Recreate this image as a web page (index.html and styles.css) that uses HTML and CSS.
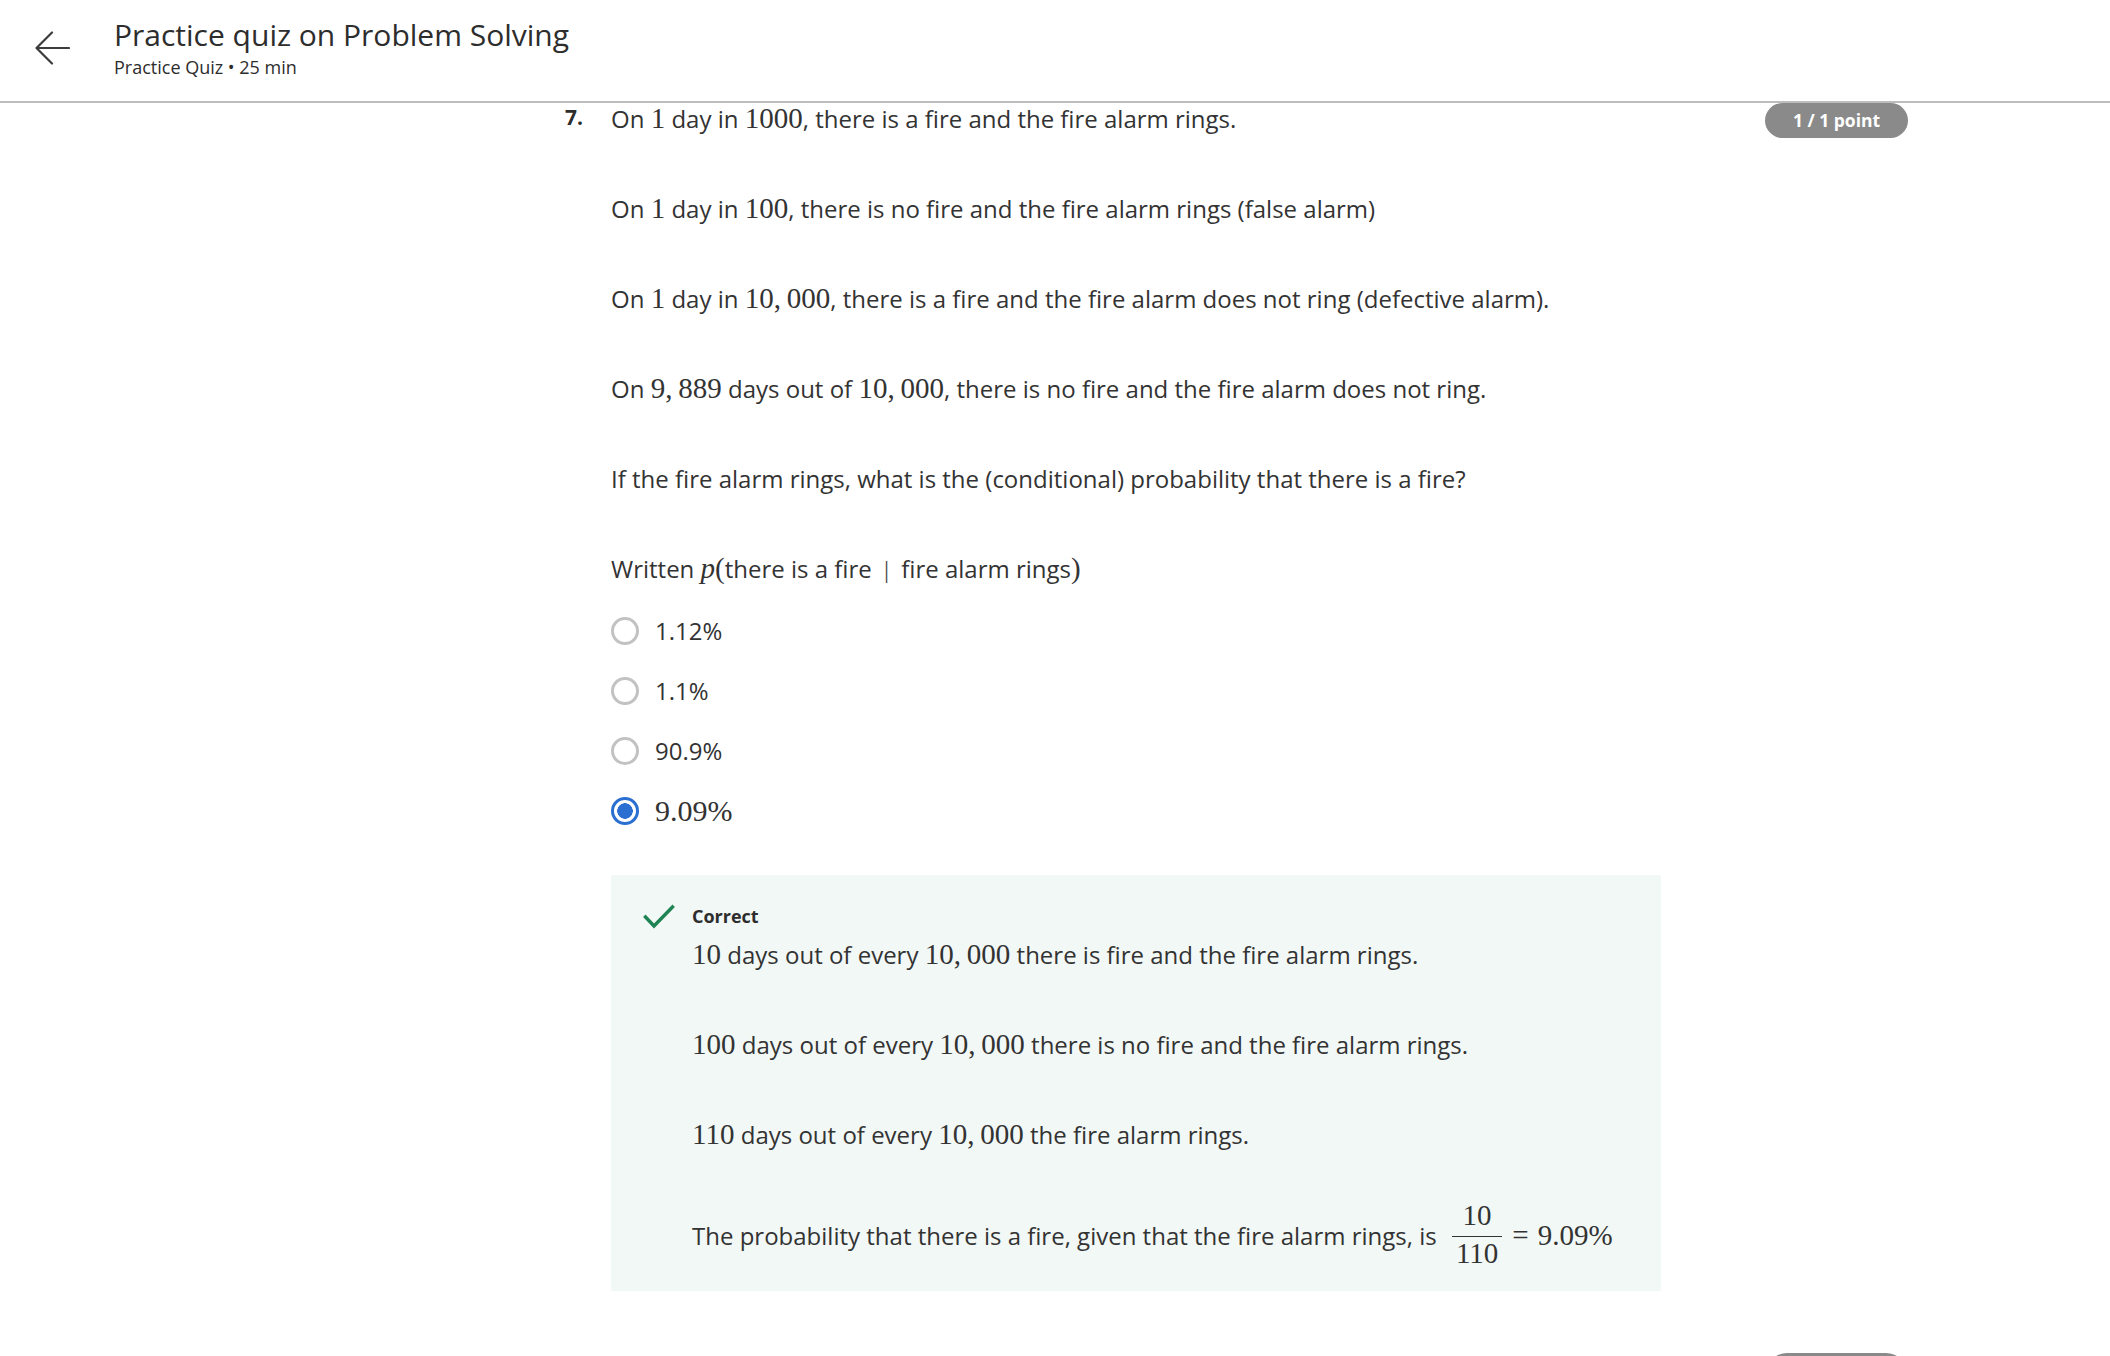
FILE: index.html
```html
<!DOCTYPE html>
<html lang="en">
<head>
<meta charset="utf-8">
<title>Practice quiz on Problem Solving</title>
<link rel="stylesheet" href="styles.css">
</head>
<body>
<header class="topbar">
  <a class="back" href="#" aria-label="Back">
    <svg width="36" height="34" viewBox="0 0 36 34" fill="none" stroke="#3d3d3d" stroke-width="2.2" stroke-linecap="round" stroke-linejoin="round"><path d="M18 1.5 L2.5 17 L18 32.5 M2.5 17 H35"/></svg>
  </a>
  <div class="titles">
    <h1 class="title">Practice quiz on Problem Solving</h1>
    <div class="subtitle">Practice Quiz • 25 min</div>
  </div>
</header>

<main class="main">
  <section class="question">
    <div class="qnum">7.</div>
    <div class="qbody">
      <p class="para">On <span class="m">1</span> day in <span class="m">1000</span>, there is a fire and the fire alarm rings.</p>
      <p class="para">On <span class="m">1</span> day in <span class="m">100</span>, there is no fire and the fire alarm rings (false alarm)</p>
      <p class="para">On <span class="m">1</span> day in <span class="m">10,&thinsp;000</span>, there is a fire and the fire alarm does not ring (defective alarm).</p>
      <p class="para">On <span class="m">9,&thinsp;889</span> days out of <span class="m">10,&thinsp;000</span>, there is no fire and the fire alarm does not ring.</p>
      <p class="para">If the fire alarm rings, what is the (conditional) probability that there is a fire?</p>
      <p class="para para-last">Written <span class="m"><i>p</i>(</span>there is a fire <span class="m bar">|</span> fire alarm rings<span class="m">)</span></p>

      <div class="options">
        <label class="option"><span class="radio"></span><span class="otext">1.12%</span></label>
        <label class="option"><span class="radio"></span><span class="otext">1.1%</span></label>
        <label class="option"><span class="radio"></span><span class="otext">90.9%</span></label>
        <label class="option"><span class="radio radio-on"></span><span class="otext m">9.09%</span></label>
      </div>

      <div class="feedback">
        <svg class="check" width="32" height="26" viewBox="0 0 32 26" fill="none" stroke="#1f8354" stroke-width="3.4" stroke-linecap="square"><path d="M2.5 13 L11 22 L29.5 3"/></svg>
        <div class="fbody">
          <div class="fhead">Correct</div>
          <p class="para"><span class="m">10</span> days out of every <span class="m">10,&thinsp;000</span> there is fire and the fire alarm rings.</p>
          <p class="para"><span class="m">100</span> days out of every <span class="m">10,&thinsp;000</span> there is no fire and the fire alarm rings.</p>
          <p class="para"><span class="m">110</span> days out of every <span class="m">10,&thinsp;000</span> the fire alarm rings.</p>
          <p class="para para-last para-frac">The probability that there is a fire, given that the fire alarm rings, is <span class="frac m"><span class="num">10</span><span class="den">110</span></span><span class="m eq">=</span><span class="m">9.09%</span></p>
        </div>
      </div>
    </div>
    <div class="badge">1 / 1 point</div>
  </section>
  <div class="footer">
    <span class="btn"></span>
  </div>
</main>
</body>
</html>
```

FILE: styles.css
```css
html, body {
  margin: 0;
  padding: 0;
  background: #ffffff;
}
body {
  font-family: "Open Sans", "Noto Sans", sans-serif;
  color: #333333;
}

.topbar {
  display: flex;
  align-items: center;
  height: 101px;
  border-bottom: 2px solid #bdbdbd;
  box-sizing: content-box;
}
.back {
  display: flex;
  margin-left: 34px;
  width: 36px;
  height: 34px;
  margin-top: -5px;
}
.titles {
  margin-left: 44px;
  margin-top: -8px;
}
.title {
  margin: 0;
  font-size: 30px;
  font-weight: 400;
  line-height: 40px;
  color: #2d2d2d;
}
.subtitle {
  font-size: 18px;
  line-height: 22px;
  margin-top: 1px;
  color: #2d2d2d;
}

.main {
  padding-left: 565px;
  width: 1343px;
}
.question {
  display: grid;
  grid-template-columns: 46px 1fr auto;
  align-items: start;
  margin-top: -1px;
}
.qnum {
  font-weight: 700;
  font-size: 21px;
  line-height: 28px;
  padding-top: 1px;
  color: #2d2d2d;
}
.qbody {
  min-width: 0;
}
.para {
  margin: 0 0 57px 0;
  font-size: 24px;
  line-height: 33px;
}
.para-last {
  margin-bottom: 0;
}
.m {
  font-family: "Liberation Serif", "Times New Roman", serif;
  font-size: 1.21em;
  line-height: 1;
}
.m i {
  font-style: italic;
}
.bar {
  font-size: 1.05em;
  margin: 0 6px;
  color: #444;
}

.options {
  margin-top: 16px;
  display: flex;
  flex-direction: column;
}
.option {
  display: flex;
  align-items: center;
  height: 60px;
  gap: 16px;
}
.radio {
  width: 28px;
  height: 28px;
  box-sizing: border-box;
  border: 3px solid #c2c2c2;
  border-radius: 50%;
  flex: none;
}
.radio-on {
  border-color: #2a6fd1;
  background: radial-gradient(circle, #2a6fd1 0 7.5px, transparent 8px);
}
.otext {
  font-size: 24px;
  line-height: 30px;
}
.otext.m {
  font-size: 30px;
}

.feedback {
  margin-top: 34px;
  width: 1050px;
  box-sizing: border-box;
  background: #f2f8f6;
  padding: 28px 32px 25px 32px;
  display: flex;
  gap: 17px;
  align-items: flex-start;
}
.check {
  flex: none;
  margin-top: 1px;
}
.fhead {
  font-size: 18px;
  font-weight: 700;
  line-height: 26px;
  margin-bottom: 9px;
  color: #2d2d2d;
}
.para-frac {
  margin-top: -6px;
}
.frac {
  display: inline-flex;
  flex-direction: column;
  align-items: center;
  vertical-align: 20px;
  margin: 0 10px 0 9px;
  font-size: 29px;
}
.num {
  line-height: 26px;
  padding: 0 4px 8px;
}
.den {
  line-height: 26px;
  padding: 3px 4px 0;
  border-top: 1.6px solid #333;
  align-self: stretch;
  text-align: center;
}
.eq {
  margin-right: 9px;
}

.badge {
  margin-top: 1px;
  margin-left: 24px;
  width: 143px;
  height: 35px;
  border-radius: 18px;
  background: #8a8a8a;
  color: #ffffff;
  font-weight: 700;
  font-size: 17.5px;
  line-height: 35px;
  text-align: center;
}

.footer {
  display: flex;
  justify-content: flex-end;
  margin-top: 62px;
}
.btn {
  display: block;
  width: 143px;
  height: 48px;
  border-radius: 22px;
  background: #8a8a8a;
}
```
